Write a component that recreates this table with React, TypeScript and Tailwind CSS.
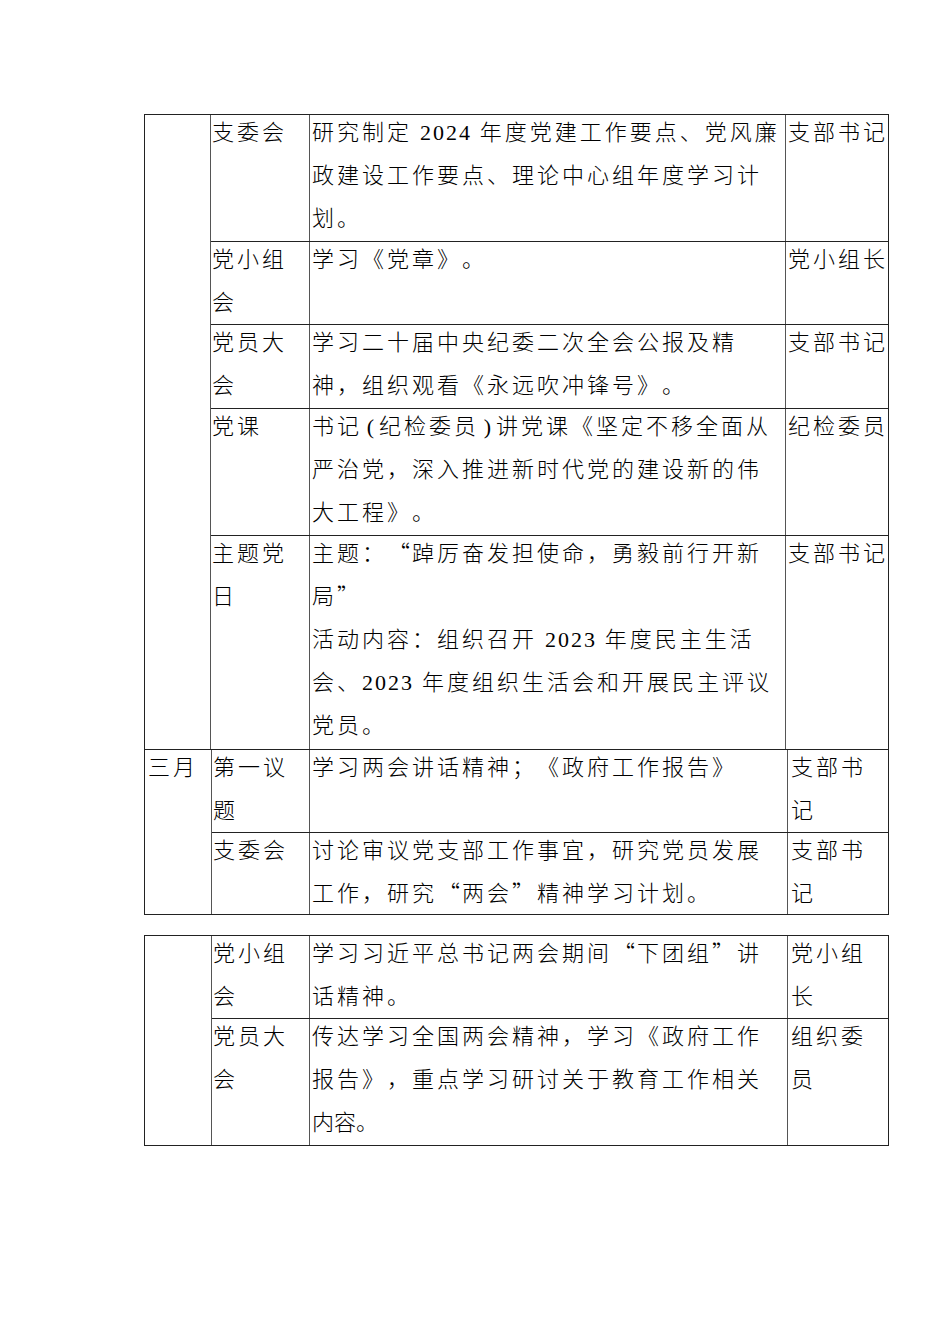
import type { ReactNode } from "react";

const N = ({ children }: { children: ReactNode }) => (
  <span className="font-['Liberation_Serif',serif] tracking-[2px] leading-none">{children}</span>
);

// full-width quote marks, opening sits to the right of its box, closing to the left
const Q = ({ children, open }: { children: ReactNode; open?: boolean }) => (
  <span
    className={`inline-block w-[25px] tracking-normal leading-none ${open ? "text-right pr-[2px]" : "text-left"}`}
  >
    {children}
  </span>
);

const P = ({ children }: { children: ReactNode }) => (
  <span className="inline-block w-[17px] text-center tracking-normal leading-none font-['Liberation_Serif',serif]">
    {children}
  </span>
);

type Row = {
  h: string;
  kind: ReactNode[];
  text: ReactNode[];
  who: ReactNode[];
};

const groupA: Row[] = [
  {
    h: "h-[126px]",
    kind: ["支委会"],
    text: [
      <>研究制定 <N>2024</N> 年度党建工作要点、党风廉</>,
      "政建设工作要点、理论中心组年度学习计",
      "划。",
    ],
    who: ["支部书记"],
  },
  { h: "h-[83px]", kind: ["党小组", "会"], text: ["学习《党章》。"], who: ["党小组长"] },
  {
    h: "h-[84px]",
    kind: ["党员大", "会"],
    text: ["学习二十届中央纪委二次全会公报及精", "神，组织观看《永远吹冲锋号》。"],
    who: ["支部书记"],
  },
  {
    h: "h-[127px]",
    kind: ["党课"],
    text: [
      <>书记<P>(</P>纪检委员<P>)</P>讲党课《坚定不移全面从</>,
      "严治党，深入推进新时代党的建设新的伟",
      "大工程》。",
    ],
    who: ["纪检委员"],
  },
  {
    h: "h-[214px]",
    kind: ["主题党", "日"],
    text: [
      <>主题：<Q open>“</Q>踔厉奋发担使命，勇毅前行开新</>,
      <>局<Q>”</Q></>,
      <>活动内容：组织召开 <N>2023</N> 年度民主生活</>,
      <>会、<N>2023</N> 年度组织生活会和开展民主评议</>,
      "党员。",
    ],
    who: ["支部书记"],
  },
];

const groupB: Row[] = [
  {
    h: "h-[82px]",
    kind: ["第一议", "题"],
    text: ["学习两会讲话精神；《政府工作报告》"],
    who: ["支部书", "记"],
  },
  {
    h: "h-[82px]",
    kind: ["支委会"],
    text: [
      "讨论审议党支部工作事宜，研究党员发展",
      <>工作，研究<Q open>“</Q>两会<Q>”</Q>精神学习计划。</>,
    ],
    who: ["支部书", "记"],
  },
];

const groupC: Row[] = [
  {
    h: "h-[82px]",
    kind: ["党小组", "会"],
    text: [<>学习习近平总书记两会期间<Q open>“</Q>下团组<Q>”</Q>讲</>, "话精神。"],
    who: ["党小组", "长"],
  },
  {
    h: "h-[127px]",
    kind: ["党员大", "会"],
    text: [
      "传达学习全国两会精神，学习《政府工作",
      "报告》，重点学习研讨关于教育工作相关",
      <span className="tracking-normal">内容。</span>,
    ],
    who: ["组织委", "员"],
  },
];

function Lines({ items }: { items: ReactNode[] }) {
  return (
    <div className="-mt-[6px]">
      {items.map((t, i) => (
        <div key={i} className="whitespace-nowrap">
          {t}
        </div>
      ))}
    </div>
  );
}

function Group({
  first,
  rows,
  wide,
  top,
}: {
  first: string;
  rows: Row[];
  wide: boolean;
  top: boolean;
}) {
  return (
    <div className={`flex ${top ? "border-t border-[#222]" : ""}`}>
      <div className={`${wide ? "w-[67px]" : "w-[66px]"} shrink-0 border-r border-[#555] pl-[3px]`}>
        <Lines items={first ? [first] : []} />
      </div>
      <div className="flex flex-1 flex-col">
        {rows.map((r, i) => (
          <div
            key={i}
            className={`flex ${r.h} ${i > 0 ? "border-t border-[#222]" : ""}`}
          >
            <div className={`${wide ? "w-[98px]" : "w-[99px]"} shrink-0 border-r border-[#555] pl-[1px]`}>
              <Lines items={r.kind} />
            </div>
            <div className={`${wide ? "w-[478px]" : "w-[476px]"} shrink-0 border-r border-[#555] pl-[2px]`}>
              <Lines items={r.text} />
            </div>
            <div className={`flex-1 ${wide ? "pl-[3px]" : "pl-[2px]"}`}>
              <Lines items={r.who} />
            </div>
          </div>
        ))}
      </div>
    </div>
  );
}

export default function App() {
  return (
    <div
      lang="zh-CN"
      className="w-[950px] h-[1344px] bg-white pt-[114px] pl-[144px] text-[22px] leading-[43px] tracking-[3px] text-black font-['Noto_Sans_CJK_SC','Liberation_Serif',sans-serif] font-light [text-spacing-trim:space-all]"
    >
      <div className="w-[745px] border border-[#222]">
        <Group first="" rows={groupA} wide={false} top={false} />
        <Group first="三月" rows={groupB} wide={true} top={true} />
      </div>
      <div className="mt-[20px] w-[745px] border border-[#222]">
        <Group first="" rows={groupC} wide={true} top={false} />
      </div>
    </div>
  );
}
